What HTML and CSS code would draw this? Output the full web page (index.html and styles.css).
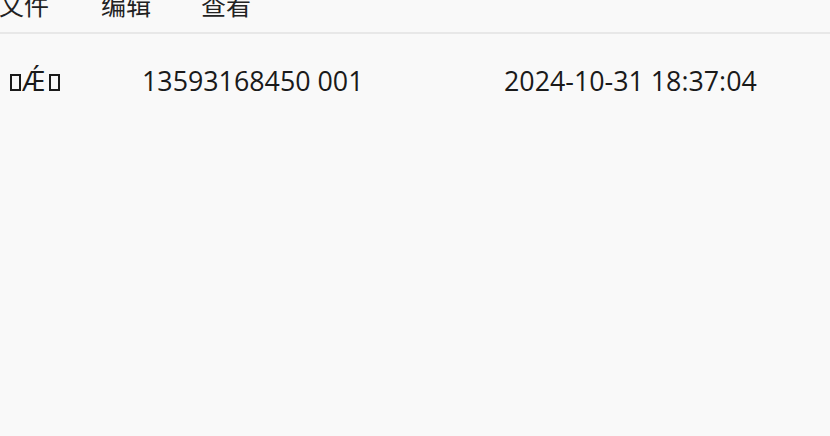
FILE: index.html
```html
<!DOCTYPE html>
<html lang="zh">
<head>
<meta charset="utf-8">
<link rel="stylesheet" href="styles.css">
</head>
<body>
<div class="menubar">
  <span class="menu m1">文件</span>
  <span class="menu m2">编辑</span>
  <span class="menu m3">查看</span>
</div>
<div class="list">
  <div class="row">
    <span class="cell c1"><span class="tofu"></span><span class="ae">Ǽ</span><span class="tofu"></span></span>
    <span class="cell c2">13593168450 001</span>
    <span class="cell c3">2024-10-31 18:37:04</span>
  </div>
</div>
</body>
</html>
```
FILE: styles.css
```css
html, body {
  margin: 0;
  padding: 0;
  background: #f9f9f9;
  width: 830px;
  height: 436px;
  overflow: hidden;
  font-family: "Open Sans", "Noto Sans CJK SC", sans-serif;
  color: #1a1a1a;
}
.menubar {
  height: 32px;
  border-bottom: 2px solid #e8e8e8;
  display: flex;
  align-items: flex-end;
  overflow: hidden;
}
.menu {
  font-family: "Noto Sans CJK SC", sans-serif;
  font-size: 25px;
  line-height: 25px;
  margin-bottom: 15px;
  color: #222;
}
.m1 { margin-left: -1px; }
.m2 { margin-left: 52px; }
.m3 { margin-left: 50px; }
.list {
  padding-top: 26px;
}
.row {
  display: flex;
  align-items: center;
  height: 40px;
  font-size: 26.8px;
}
.cell { white-space: nowrap; }
.c1 {
  width: 142px;
  padding-left: 10px;
  box-sizing: border-box;
  display: flex;
  align-items: center;
}
.c2 { width: 362px; }
.ae {
  display: inline-block;
  margin-left: 1px;
  letter-spacing: 2px;
}
.tofu {
  display: inline-block;
  width: 11px;
  height: 17px;
  border: 2px solid #1a1a1a;
  box-sizing: border-box;
  margin-top: 4px;
}
.ae + .tofu { margin-left: 2px; }
```
